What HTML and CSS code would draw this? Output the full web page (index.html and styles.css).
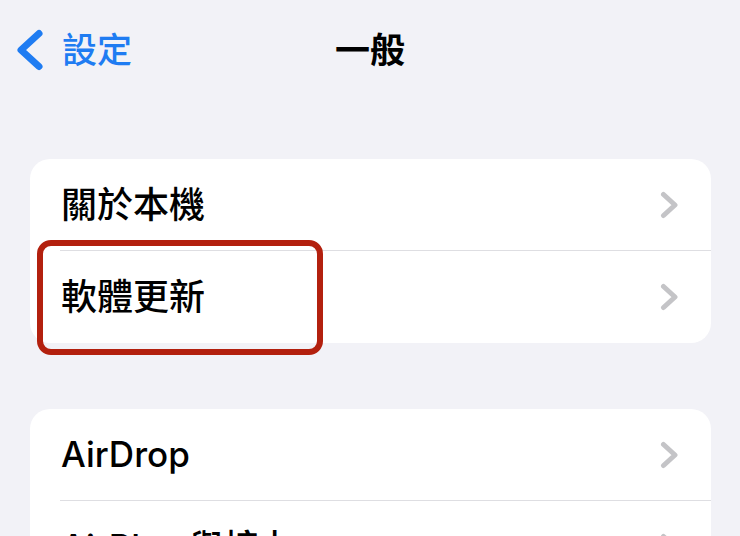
FILE: index.html
```html
<!DOCTYPE html>
<html lang="zh-Hant">
<head>
<meta charset="utf-8">
<title>一般</title>
<link rel="stylesheet" href="styles.css">
</head>
<body>
<div class="page">
  <header class="nav">
    <a class="back" href="#">
      <svg class="back-icon" width="30" height="44" viewBox="0 0 30 44"><polyline points="24,5.5 6,22 24,38.5" fill="none" stroke="#1f7cf2" stroke-width="7" stroke-linecap="round" stroke-linejoin="round"/></svg>
      <span class="back-label">設定</span>
    </a>
    <h1 class="title">一般</h1>
    <div class="nav-spacer"></div>
  </header>

  <section class="group first">
    <div class="row"><span class="label cjk">關於本機</span><svg class="chev" width="20" height="28" viewBox="0 0 20 28"><polyline points="3.5,3.5 15,14 3.5,24.5" fill="none" stroke="#c4c4c7" stroke-width="5" stroke-linecap="round" stroke-linejoin="round"/></svg></div>
    <div class="row last"><span class="label cjk">軟體更新</span><svg class="chev" width="20" height="28" viewBox="0 0 20 28"><polyline points="3.5,3.5 15,14 3.5,24.5" fill="none" stroke="#c4c4c7" stroke-width="5" stroke-linecap="round" stroke-linejoin="round"/></svg></div>
    <div class="highlight"></div>
  </section>

  <section class="group second">
    <div class="row"><span class="label">AirDrop</span><svg class="chev" width="20" height="28" viewBox="0 0 20 28"><polyline points="3.5,3.5 15,14 3.5,24.5" fill="none" stroke="#c4c4c7" stroke-width="5" stroke-linecap="round" stroke-linejoin="round"/></svg></div>
    <div class="row last"><span class="label">AirPlay 與接力</span><svg class="chev" width="20" height="28" viewBox="0 0 20 28"><polyline points="3.5,3.5 15,14 3.5,24.5" fill="none" stroke="#c4c4c7" stroke-width="5" stroke-linecap="round" stroke-linejoin="round"/></svg></div>
  </section>
</div>
</body>
</html>
```

FILE: styles.css
```css
html, body {
  margin: 0;
  padding: 0;
  overflow: hidden;
  background: #f2f2f7;
}
body {
  font-family: "Inter", "Noto Sans CJK TC", sans-serif;
  color: #000;
}
.page {
  width: 740px;
  height: 536px;
  overflow: hidden;
}
.nav {
  height: 100px;
  display: grid;
  grid-template-columns: 1fr auto 1fr;
  align-items: center;
}
.back {
  display: flex;
  align-items: center;
  gap: 17px;
  padding-left: 15px;
  text-decoration: none;
  color: #1f7cf2;
}
.back-icon {
  display: block;
}
.back-label {
  font-size: 35px;
  font-weight: 500;
  line-height: 1;
}
.title {
  margin: 0;
  font-size: 35px;
  font-weight: 700;
  line-height: 1;
  text-align: center;
}
.group {
  position: relative;
  background: #fff;
  border-radius: 20px;
  margin: 0 29px 0 30px;
}
.group.first {
  margin-top: 59px;
}
.group.second {
  margin-top: 66px;
}
.row {
  box-sizing: border-box;
  height: 92px;
  margin-left: 30px;
  padding-right: 31px;
  display: flex;
  align-items: center;
  justify-content: space-between;
  border-bottom: 1px solid #dedee2;
}
.row.last {
  border-bottom: none;
}
.label {
  font-size: 35px;
  font-weight: 500;
  line-height: 1;
  padding-left: 1px;
}
.label.cjk {
  font-size: 36px;
}
.chev {
  display: block;
}
.highlight {
  position: absolute;
  left: 7px;
  top: 81px;
  width: 286px;
  height: 115px;
  box-sizing: border-box;
  border: 6px solid #b3200e;
  border-radius: 14px;
  pointer-events: none;
}
```
